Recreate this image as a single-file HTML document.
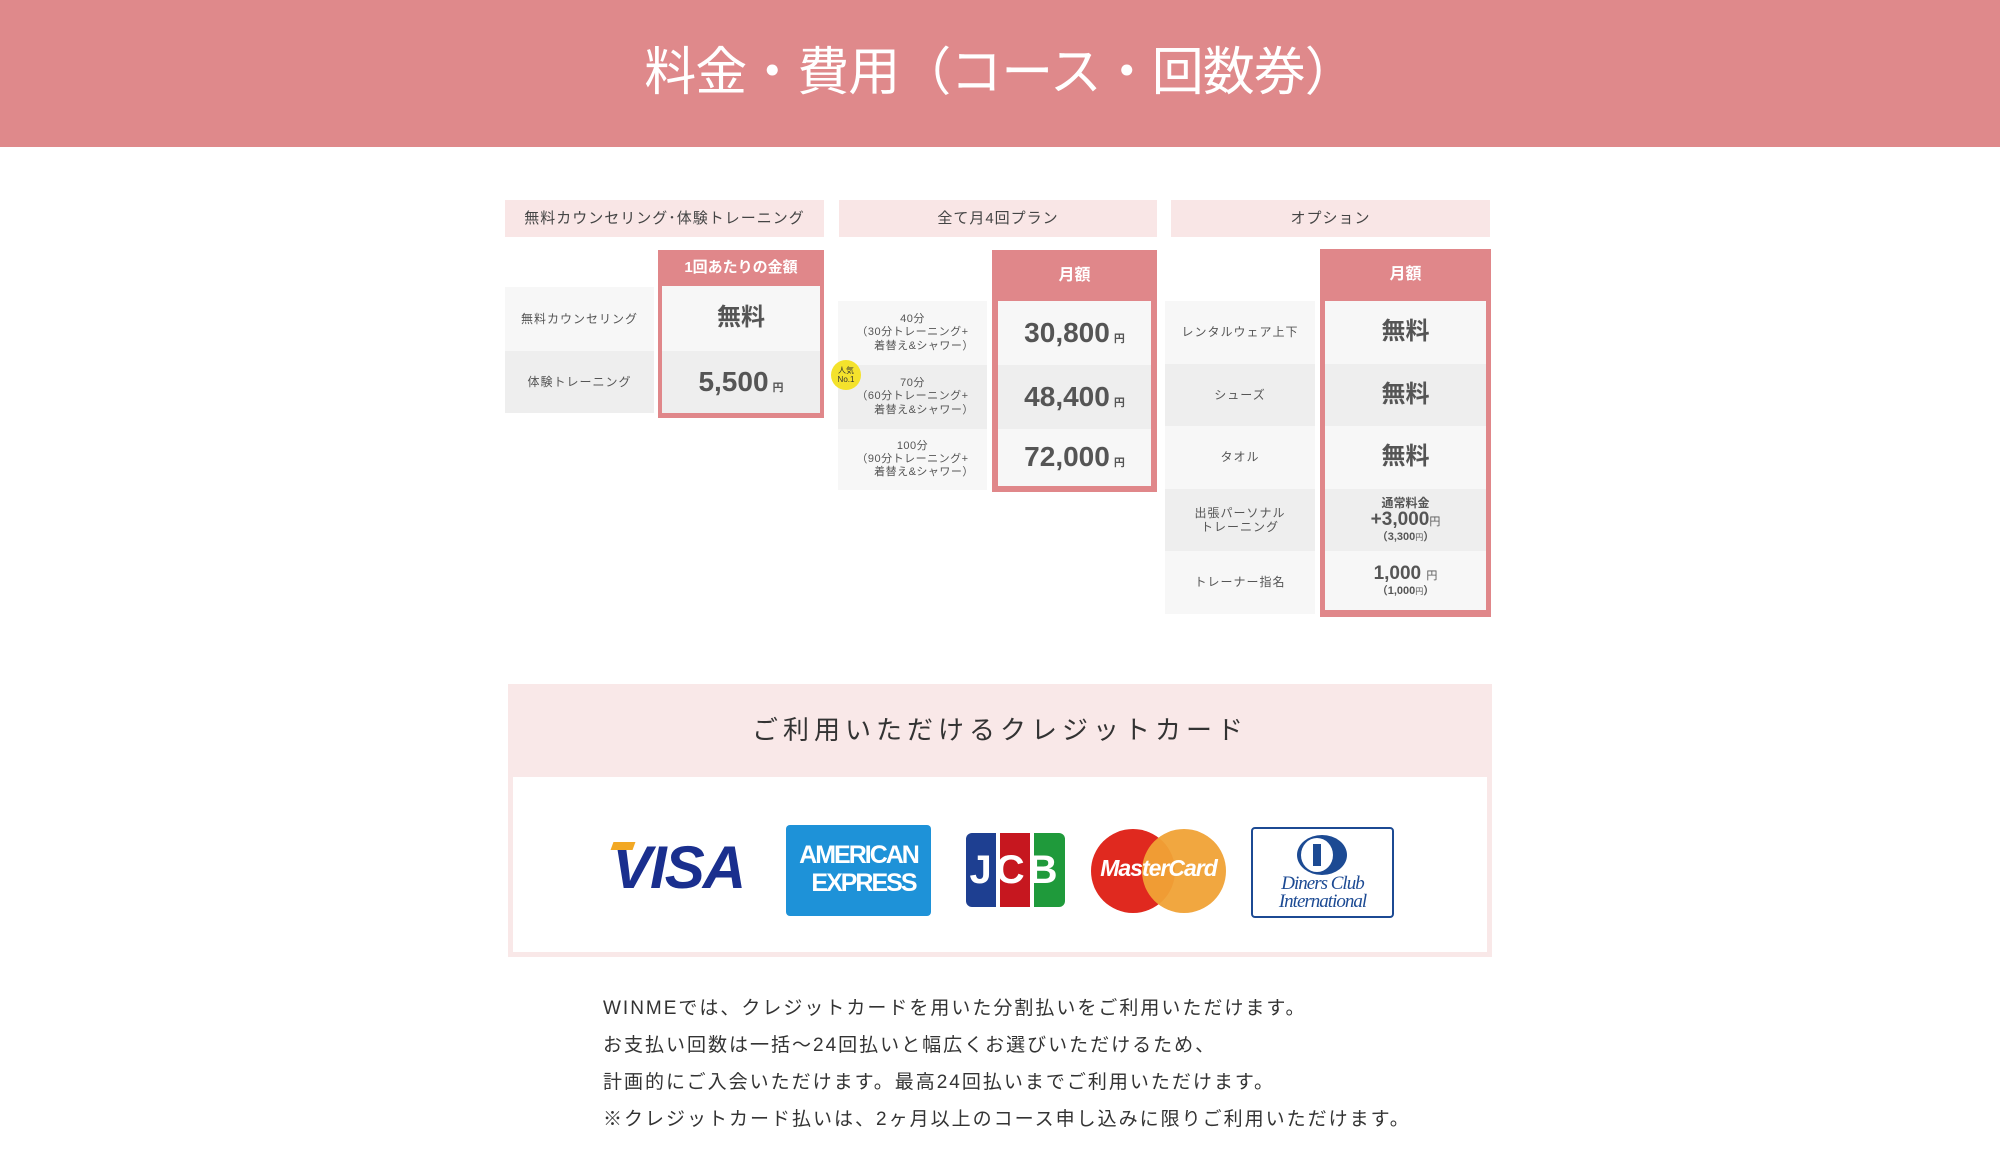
<!DOCTYPE html>
<html><head><meta charset="utf-8"><style>
*{margin:0;padding:0;box-sizing:border-box}
body{width:2000px;height:1172px;background:#fff;position:relative;font-family:"Liberation Sans","Noto Sans CJK JP",sans-serif;color:#444;overflow:hidden}
.a{position:absolute}
.hdr{left:0;top:0;width:2000px;height:147px;background:#df898b;color:#fff;font-size:52px;text-align:center;line-height:147px;letter-spacing:-1px}
.ch{background:#f9e6e6;height:37px;line-height:37px;text-align:center;font-size:15px;color:#444;letter-spacing:1px}
.lb{text-align:center;font-size:12px;color:#555;display:flex;align-items:center;justify-content:center;line-height:1.2;letter-spacing:1px}
.l1{background:#f7f7f7}.l2{background:#eeeeee}
.box{background:#e0878a}
.bh{color:#fff;font-weight:bold;text-align:center;font-size:16px}
.pc{display:flex;align-items:center;justify-content:center;font-weight:bold;color:#555;font-size:28px;flex-direction:column;line-height:1.1}
.pc small{font-size:11px;font-weight:normal}
.yen{font-size:11px;margin-left:4px}
.ln{left:603px;font-size:19px;letter-spacing:2px;color:#333}
</style></head><body>
<div class="a hdr">料金・費用（コース・回数券）</div>

<div class="a ch" style="left:505px;top:200px;width:319px">無料カウンセリング･体験トレーニング</div>
<div class="a ch" style="left:839px;top:200px;width:318px">全て月4回プラン</div>
<div class="a ch" style="left:1171px;top:200px;width:319px">オプション</div>

<!-- col1 -->
<div class="a lb l1" style="left:505px;top:287px;width:149px;height:64px">無料カウンセリング</div>
<div class="a lb l2" style="left:505px;top:351px;width:149px;height:62px">体験トレーニング</div>
<div class="a box" style="left:658px;top:250px;width:166px;height:168px"></div>
<div class="a bh" style="left:658px;top:250px;width:166px;height:36px;line-height:36px;font-size:15px">1回あたりの金額</div>
<div class="a pc l1" style="left:662px;top:286px;width:158px;height:65px;font-size:24px">無料</div>
<div class="a pc l2" style="left:662px;top:351px;width:158px;height:62px"><span>5,500<span class="yen">円</span></span></div>

<!-- col2 -->
<div class="a lb l1" style="left:838px;top:301px;width:149px;height:64px;font-size:11px;letter-spacing:0.5px">40分<br>（30分トレーニング+<br>　　着替え&amp;シャワー）</div>
<div class="a lb l2" style="left:838px;top:365px;width:149px;height:64px;font-size:11px;letter-spacing:0.5px">70分<br>（60分トレーニング+<br>　　着替え&amp;シャワー）</div>
<div class="a lb l1" style="left:838px;top:429px;width:149px;height:61px;font-size:11px;letter-spacing:0.5px">100分<br>（90分トレーニング+<br>　　着替え&amp;シャワー）</div>
<div class="a" style="left:831px;top:360px;width:30px;height:30px;border-radius:50%;background:#f4e22c;font-size:8px;line-height:9px;text-align:center;padding-top:6px;color:#333">人気<br>No.1</div>
<div class="a box" style="left:992px;top:250px;width:165px;height:242px"></div>
<div class="a bh" style="left:992px;top:250px;width:165px;height:51px;line-height:51px">月額</div>
<div class="a pc l1" style="left:998px;top:301px;width:153px;height:64px"><span>30,800<span class="yen">円</span></span></div>
<div class="a pc l2" style="left:998px;top:365px;width:153px;height:64px"><span>48,400<span class="yen">円</span></span></div>
<div class="a pc l1" style="left:998px;top:429px;width:153px;height:57px"><span>72,000<span class="yen">円</span></span></div>

<!-- col3 -->
<div class="a lb l1" style="left:1165px;top:301px;width:150px;height:63px">レンタルウェア上下</div>
<div class="a lb l2" style="left:1165px;top:364px;width:150px;height:62px">シューズ</div>
<div class="a lb l1" style="left:1165px;top:426px;width:150px;height:63px">タオル</div>
<div class="a lb l2" style="left:1165px;top:489px;width:150px;height:62px">出張パーソナル<br>トレーニング</div>
<div class="a lb l1" style="left:1165px;top:551px;width:150px;height:63px">トレーナー指名</div>
<div class="a box" style="left:1320px;top:249px;width:171px;height:368px"></div>
<div class="a bh" style="left:1320px;top:249px;width:171px;height:52px;line-height:52px">月額</div>
<div class="a pc l1" style="left:1325px;top:301px;width:161px;height:63px;font-size:24px">無料</div>
<div class="a pc l2" style="left:1325px;top:364px;width:161px;height:62px;font-size:24px">無料</div>
<div class="a pc l1" style="left:1325px;top:426px;width:161px;height:63px;font-size:24px">無料</div>
<div class="a pc l2" style="left:1325px;top:489px;width:161px;height:62px;font-size:19px"><span style="font-size:12px">通常料金</span><span>+3,000<small>円</small></span><span style="font-size:11px">（3,300<small style="font-size:8px">円</small>）</span></div>
<div class="a pc l1" style="left:1325px;top:551px;width:161px;height:59px;font-size:19px"><span>1,000 <small>円</small></span><span style="font-size:11px">（1,000<small style="font-size:8px">円</small>）</span></div>

<!-- credit -->
<div class="a" style="left:508px;top:684px;width:984px;height:273px;background:#f9e8e8"></div>
<div class="a" style="left:508px;top:684px;width:984px;height:93px;line-height:93px;text-align:center;font-size:26px;letter-spacing:5px;color:#333">ご利用いただけるクレジットカード</div>
<div class="a" style="left:513px;top:777px;width:974px;height:175px;background:#fff"></div>
<div class="a" style="left:612px;top:838px;font-size:60px;font-weight:bold;font-style:italic;color:#1a2f8e;letter-spacing:-2px;line-height:60px">VISA</div>
<div class="a" style="left:612px;top:842px;width:22px;height:8px;background:#f2a824;transform:skewX(-20deg)"></div>
<div class="a" style="left:786px;top:825px;width:145px;height:91px;background:#1e92d8;border-radius:4px;color:#fff;font-weight:bold;font-size:25px;line-height:28px;text-align:center;padding-top:16px;letter-spacing:-2px">AMERICAN<br>&nbsp;&nbsp;EXPRESS</div>
<div class="a" style="left:966px;top:833px;width:30px;height:74px;background:#1e3f91;border-radius:6px 0 0 6px"></div>
<div class="a" style="left:1000px;top:833px;width:30px;height:74px;background:#c6171f"></div>
<div class="a" style="left:1034px;top:833px;width:31px;height:74px;background:#1f9a3b;border-radius:0 6px 6px 0"></div>
<div class="a" style="left:966px;top:848px;width:99px;text-align:center;color:#fff;font-weight:bold;font-size:40px;letter-spacing:4px">JCB</div>
<div class="a" style="left:1091px;top:829px;width:84px;height:84px;border-radius:50%;background:#e0291f"></div>
<div class="a" style="left:1142px;top:829px;width:84px;height:84px;border-radius:50%;background:#f0a236;opacity:.95"></div>
<div class="a" style="left:1091px;top:855px;width:135px;text-align:center;color:#fff;font-weight:bold;font-style:italic;font-size:23px;letter-spacing:-1px">MasterCard</div>
<div class="a" style="left:1251px;top:827px;width:143px;height:91px;border:2px solid #1c4a93;border-radius:4px;background:#fff"></div>
<div class="a" style="left:1297px;top:835px;width:50px;height:40px;border-radius:50%;background:#1c4a93"></div>
<div class="a" style="left:1301px;top:838px;width:32px;height:34px;border-radius:50%;background:#fff"></div>
<div class="a" style="left:1313px;top:844px;width:8px;height:22px;background:#1c4a93"></div>
<div class="a" style="left:1251px;top:875px;width:143px;text-align:center;font-family:'Liberation Serif',serif;font-style:italic;color:#1c4a93;font-size:19px;line-height:18px;letter-spacing:-1px">Diners Club<br>International</div>

<div class="a ln" style="top:993px">WINMEでは、クレジットカードを用いた分割払いをご利用いただけます。</div>
<div class="a ln" style="top:1030px">お支払い回数は一括～24回払いと幅広くお選びいただけるため、</div>
<div class="a ln" style="top:1067px">計画的にご入会いただけます。最高24回払いまでご利用いただけます。</div>
<div class="a ln" style="top:1104px">※クレジットカード払いは、2ヶ月以上のコース申し込みに限りご利用いただけます。</div>
</body></html>
